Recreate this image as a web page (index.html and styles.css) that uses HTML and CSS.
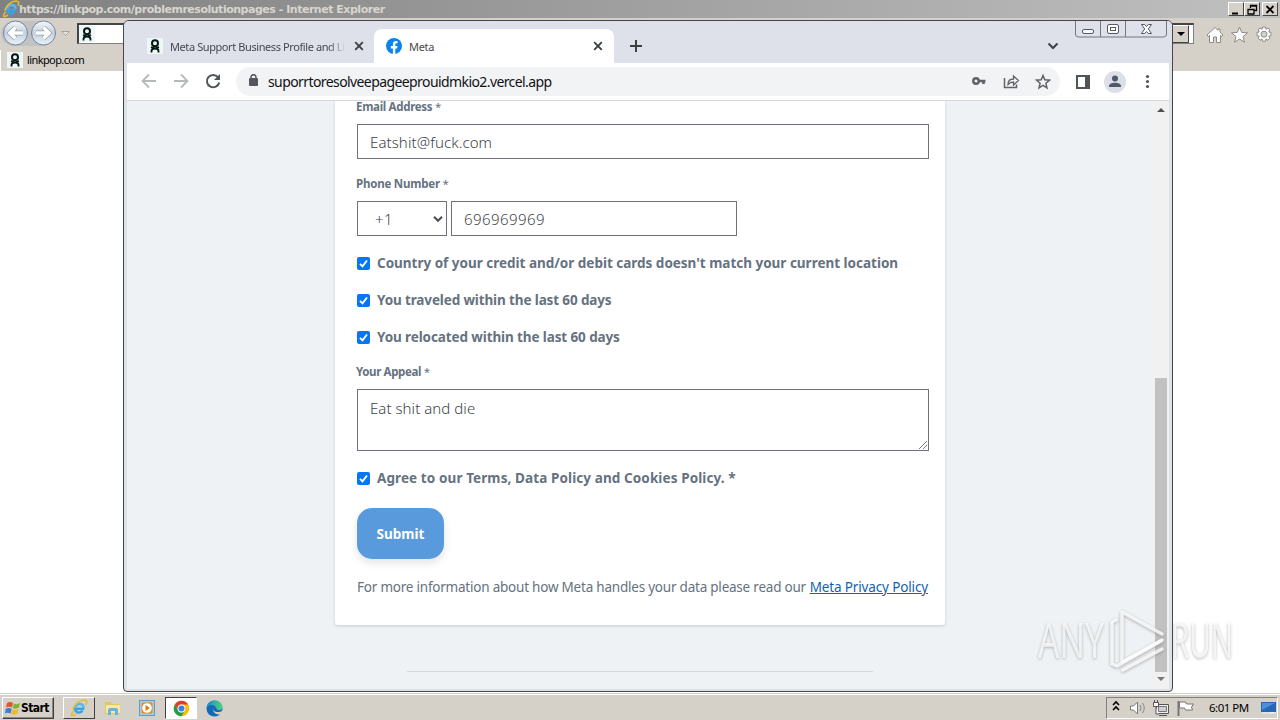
FILE: index.html
```html
<!DOCTYPE html>
<html lang="en">
<head>
<meta charset="utf-8">
<title>Meta</title>
<link rel="stylesheet" href="styles.css">
</head>
<body>
<svg class="defs" width="0" height="0">
  <symbol id="linkpop" viewBox="0 0 16 16"><rect width="16" height="16" fill="#edf7f6"/><circle cx="8" cy="5.300" r="3" fill="none" stroke="#0b1714" stroke-width="2"/><path d="M4.500 14.500v-1.500c0-1.500 1.500-2.500 3.500-2.500s3.500 1 3.500 2.500v1.500M4 9l4 1.500L12 9" fill="none" stroke="#0b1714" stroke-width="1.800"/></symbol>
  <symbol id="close" viewBox="0 0 10 10"><path d="M1.200 1.200l7.600 7.600M8.800 1.200l-7.600 7.600" stroke="#3c4043" stroke-width="1.900"/></symbol>
  <symbol id="ie" viewBox="0 0 18 18"><path d="M14.300 9.800H5.200c.1 4.300 5.700 4.900 7.200 1.700" fill="none" stroke="#38a3e8" stroke-width="2.600"/><path d="M5.200 8.800c.2-5.100 8.300-5.200 8.500 0" fill="none" stroke="#54b9f2" stroke-width="2.600"/><path d="M3.500 12C-.5 17 2 17.600 6 15M3 11C3.500 5 11 .5 15 1.200c2.300.5 2 2.400 1 4.500" fill="none" stroke="#e9bd28" stroke-width="1.500"/></symbol>
</svg>
<div class="desktop">
  <header class="ie-title">
    <svg class="ie-logo" width="18" height="18"><use href="#ie"/></svg>
    <span class="ie-name">https://linkpop.com/problemresolutionpages - Internet Explorer</span>
    <div class="classic">
      <svg width="15" height="14"><path d="M3 10.500h6" stroke="#000" stroke-width="2"/></svg>
      <svg width="15" height="14"><path d="M5.500 5V2.500h6v5H9M5 3h7" fill="none" stroke="#000" stroke-width="1.300"/><path d="M3 6.500h6v4.500H3zM2.500 6.500h7" fill="none" stroke="#000" stroke-width="1.300"/></svg>
      <svg class="gap" width="15" height="14"><path d="M3.500 3l7 7M10.500 3l-7 7" stroke="#000" stroke-width="1.800"/></svg>
    </div>
  </header>
  <div class="ie-bar">
    <div class="ie-nav">
      <svg width="72" height="27" viewBox="0 0 72 27"><defs><linearGradient id="nb" x2="0" y2="1"><stop stop-color="#f6f8fa"/><stop offset=".5" stop-color="#c5cfda"/><stop offset="1" stop-color="#e9f4fb"/></linearGradient></defs><rect x="1" y="1" width="54" height="25" rx="12.500" fill="#c1c2c3"/><circle cx="15.500" cy="13" r="12" fill="url(#nb)" stroke="#71869d"/><circle cx="43.500" cy="13" r="12" fill="url(#nb)" stroke="#71869d"/><path d="M23 13H10M15.500 7.500L10 13l5.500 5.500M36 13h13M43.500 7.500L49 13l-5.500 5.500" fill="none" stroke="#8fa0b2" stroke-width="5"/><path d="M23 13H10M15.500 7.500L10 13l5.500 5.500M36 13h13M43.500 7.500L49 13l-5.500 5.500" fill="none" stroke="#fff" stroke-width="3.600"/><path d="M61.500 11.500h8l-4 4z" fill="#e5e1db" stroke="#aaa59c"/></svg>
    </div>
    <div class="address"><svg width="16" height="16"><use href="#linkpop"/></svg><i class="drop"><b></b></i></div>
    <svg class="ie-icons" width="72" height="20" viewBox="0 0 72 20" fill="#fff" stroke="#8e8b86"><path d="M2 10l8-7.500 3 2.800V4h2v3.300L18 10l-1.200 1.500-1.300-1V17.500h-4V12H8.500v5.500h-4v-7l-1.300 1z"/><path d="M34.500 2l2.200 5.400 5.800.4-4.500 3.700 1.500 5.700-5-3.200-5 3.200 1.500-5.700-4.500-3.700 5.800-.4z"/><path d="M57.500 2h3l.5 2.300 2-1.300 2 2-1.300 2 2.300.5v3.200l-2.300.5 1.300 2-2 2-2-1.300-.5 2.300h-3l-.5-2.300-2 1.300-2-2 1.300-2-2.300-.5V7.500l2.300-.5-1.300-2 2-2 2 1.300z"/><circle cx="59" cy="9.200" r="3" fill="#d5d0ca"/></svg>
  </div>
  <div class="ie-tab"><svg width="16" height="16"><use href="#linkpop"/></svg><span>linkpop.com</span></div>
  <div class="ie-page"></div>
  <footer class="taskbar">
    <div class="start"><svg width="16" height="16" viewBox="0 0 16 16"><path d="M2 3q3-2 6 0L7 7.500q-3-1.500-6 0z" fill="#e2562a"/><path d="M9 3.500q3 1.500 6-.5l-1.200 4.500q-3 2-6 .5z" fill="#7cb52e"/><path d="M.8 8.800q3-1.500 6 0L5.600 13.500q-3-1.500-5.600 0z" fill="#3c7fc8"/><path d="M7.600 9.300q3 1.500 6-.3L12.300 13.700q-3 1.800-6 .3z" fill="#f4b922"/></svg><span>Start</span></div>
    <div class="task raised"><svg width="18" height="18"><use href="#ie"/></svg></div>
    <div class="task"><svg width="18" height="16" viewBox="0 0 18 16"><path d="M1 2h6l1 2h8v10H1z" fill="#e4c65f"/><path d="M2 5h14v8H2z" fill="#f8eaa4"/><path d="M4 15V10q0-2 2-2h6q2 0 2 2v5h-3v-4H7v4z" fill="#69b3dd"/></svg></div>
    <div class="task"><svg width="16" height="16" viewBox="0 0 16 16"><rect x=".5" y=".5" width="15" height="15" fill="#a3cdea" stroke="#5c9cc9"/><rect x="2.500" y="2.500" width="11" height="11" rx="1" fill="#f08b1d"/><circle cx="8" cy="8" r="4.800" fill="#fff"/><path d="M6.500 5l4.300 3-4.300 3z" fill="#e2730c"/></svg></div>
    <div class="task pressed"><svg width="17" height="17" viewBox="0 0 48 48"><circle cx="24" cy="24" r="22" fill="#fbbc04"/><path d="M5 13A22 22 0 0 1 43 13H24a11 11 0 0 0-9.500 16.500z" fill="#e33b2e"/><path d="M5 13a22 22 0 0 0 19 33l9.500-16.500a11 11 0 0 1-19 0z" fill="#259b4b"/><circle cx="24" cy="24" r="11" fill="#fff"/><circle cx="24" cy="24" r="8.500" fill="#3b7de9"/></svg></div>
    <div class="task edge"><svg width="17" height="17" viewBox="0 0 17 17"><defs><linearGradient id="eg"><stop stop-color="#158bd1"/><stop offset="1" stop-color="#50d37c"/></linearGradient></defs><circle cx="8.500" cy="8.500" r="8" fill="#1469b6"/><path d="M.5 9C1-2 16-1 16.500 7c0 4-6 4-6 1.500C9 4 2 3.500.5 9z" fill="url(#eg)"/><path d="M7.500 8c-1 3.500 3 5 7.500 3.500l1.500-1v3l-2 1C10 15 6 12 7.500 8z" fill="#d5d0ca"/></svg></div>
    <div class="tray">
      <svg width="112" height="20" viewBox="0 0 112 20" fill="none"><path d="M6 7l3-3 3 3M6 12l3-3 3 3" stroke="#000" stroke-width="1.600"/><path d="M23.500 8h3l4-4v12l-4-4h-3z" fill="#fff" stroke="#777"/><path d="M33 7q2 3 0 6M35.500 5q3.500 5 0 10" stroke="#888"/><path d="M49.500 6.500h12v9h-12zM52 17.500h8" fill="#eee" stroke="#555"/><path d="M51.500 8.500h8v5h-8z" fill="#d0d0d0" stroke="#777"/><path d="M46.500 4.500h5v4h-5zM47.500 2v2M50.500 2v2M49 9v7h3" fill="#f8f8f8" stroke="#555"/><path d="M71.500 3v15" stroke="#777" stroke-width="2"/><path d="M72.500 4h6l1 2h7l-2 3 1 3h-7l-1-2h-5z" fill="#fff" stroke="#777"/></svg>
      <span>6:01 PM</span>
      <svg class="desk" width="16" height="14" viewBox="0 0 16 14"><path d="M0 1h15v10H0z" fill="#2866b8"/><path d="M1 2h13L1 9z" fill="#4f91d8"/><path d="M1 12h14M9 11.500h4" stroke="#eef4fb"/></svg>
    </div>
  </footer>
</div>

<main class="chrome">
  <div class="tabs">
    <div class="tab back"><svg width="16" height="16"><use href="#linkpop"/></svg><span class="tabname">Meta Support Business Profile and Lin</span><svg width="10" height="10"><use href="#close"/></svg></div>
    <div class="tab front"><svg width="16" height="16" viewBox="0 0 16 16"><circle cx="8" cy="8" r="8" fill="#0c84ee"/><path d="M6.900 16v-5.500H4.800V8.100h2.100V6.300c0-2.200 1.200-3.200 3-3.200l1.700.15v2h-1c-1 0-1.300.5-1.300 1.200v1.650h2.200l-.4 2.400H9.300V16z" fill="#fff"/></svg><span class="metaname">Meta</span><svg width="10" height="10"><use href="#close"/></svg></div>
    <svg class="plus" width="12" height="12"><path d="M6 0v12M0 6h12" stroke="#3c4043" stroke-width="2"/></svg>
    <svg class="chev" width="12" height="8"><path d="M1.500 1.500L6 6l4.500-4.500" fill="none" stroke="#3c4043" stroke-width="2"/></svg>
    <svg class="aero" width="94" height="18" viewBox="0 0 94 18" fill="none" stroke="#74777f"><path d="M1.500 0v13q0 3 3 3h85q3 0 3-3V0M26.500 0v16M51.500 0v16"/><g stroke="#555962"><rect x="8.500" y="8.500" width="11" height="4" rx="1.500" fill="#fff"/><rect x="33.500" y="3.500" width="11" height="9" rx="1.500" fill="#fff"/><rect x="36.500" y="6.500" width="5" height="3"/><path d="M67.500 3.500h3.200l1.800 2 1.800-2h3.200L74.300 8l3.200 4.500h-3.200l-1.800-2-1.800 2h-3.200L70.700 8z" fill="#fff"/></g></svg>
  </div>
  <div class="toolbar">
    <svg class="nav" width="84" height="18" viewBox="0 0 84 18" fill="none" stroke-width="1.800"><path d="M16 9H2.500M9 2.500L2.500 9 9 15.500M34 9h13.500M41 2.500L47.500 9 41 15.500" stroke="#b6b9bc"/><path d="M78 5.200A6.200 6.200 0 1 0 79.200 10.500" stroke="#50545a" stroke-width="2"/><path d="M80 2v6h-6z" fill="#50545a"/></svg>
    <div class="omni">
      <svg class="lock" width="9" height="12"><rect y="4" width="9" height="8" rx="1" fill="#54585d"/><path d="M2 5V3.200a2.500 2.500 0 0 1 5 0V5" fill="none" stroke="#54585d" stroke-width="1.500"/></svg>
      <span class="url">suporrtoresolveepageeprouidmkio2.vercel.app</span>
      <svg class="actions" width="80" height="18" viewBox="0 0 80 18" fill="none" stroke="#5f6368"><circle cx="5" cy="8" r="2.700" stroke-width="2.400"/><path d="M8 8H14.500M12.500 8v3" stroke-width="2.600"/><path d="M33.500 5v9.500h12v-3" stroke-width="1.500"/><path d="M37 11.500c0-4 2.500-5.500 5.500-5.500V3l5 4.500-5 4.500V9c-2.500 0-4 .6-5.500 2.500z" stroke-width="1.300"/><path d="M72 2.500l1.800 4.300 4.700.4-3.600 3.100 1.100 4.600-4-2.500-4 2.500 1.100-4.600-3.600-3.100 4.700-.4z" stroke-width="1.500"/></svg>
    </div>
    <svg class="right" width="86" height="24" viewBox="0 0 86 24"><path d="M4 6h12v12H4z" fill="none" stroke="#50545a" stroke-width="2"/><path d="M12 5h5v14h-5z" fill="#50545a"/><circle cx="42" cy="12" r="11" fill="#dcdfe7"/><circle cx="42" cy="8.500" r="3" fill="#50586a"/><path d="M36 17v-1c0-4.500 12-4.500 12 0v1z" fill="#50586a"/><g fill="#50545a"><circle cx="74.500" cy="6.500" r="1.600"/><circle cx="74.500" cy="11.500" r="1.600"/><circle cx="74.500" cy="16.500" r="1.600"/></g></svg>
  </div>
  <div class="viewport">
    <div class="page">
      <form class="card">
        <div class="label"><span class="l1">Email Address <em>*</em></span></div>
        <div class="field"><span class="v1">Eatshit@fuck.com</span></div>
        <div class="label second"><span class="l2">Phone Number <em>*</em></span></div>
        <div class="phone">
          <div class="field code"><span class="v2">+1</span><svg width="10" height="7"><path d="M1 .8l4 4 4-4" fill="none" stroke="#4a4d55" stroke-width="2"/></svg></div>
          <div class="field number"><span class="v3">696969969</span></div>
        </div>
        <div class="checks">
          <div class="check"><svg class="box" width="13" height="13"><use href="#tick"/><path d="M3 6.800l2.500 2.500L10 3.500" fill="none" stroke="#fff" stroke-width="1.900"/></svg><span class="c1">Country of your credit and/or debit cards doesn't match your current location</span></div>
          <div class="check"><svg class="box" width="13" height="13"><path d="M3 6.800l2.500 2.500L10 3.500" fill="none" stroke="#fff" stroke-width="1.900"/></svg><span class="c2">You traveled within the last 60 days</span></div>
          <div class="check"><svg class="box" width="13" height="13"><path d="M3 6.800l2.500 2.500L10 3.500" fill="none" stroke="#fff" stroke-width="1.900"/></svg><span class="c3">You relocated within the last 60 days</span></div>
        </div>
        <div class="label appeal"><span class="l3">Your Appeal <em>*</em></span></div>
        <div class="area"><span class="v4">Eat shit and die</span><svg width="9" height="9"><path d="M1 9l8-8M5 9l4-4" stroke="#777"/></svg></div>
        <div class="check agree"><svg class="box" width="13" height="13"><path d="M3 6.800l2.500 2.500L10 3.500" fill="none" stroke="#fff" stroke-width="1.900"/></svg><span class="c4">Agree to our Terms, Data Policy and Cookies Policy. *</span></div>
        <div class="submit"><span class="c5">Submit</span></div>
        <div class="info"><span class="p1">For more information about how Meta handles your data please read our</span><a class="p2">Meta Privacy Policy</a></div>
      </form>
      <div class="rule"></div>
    </div>
    <div class="scroll"><i class="up"></i><i class="thumb"></i><i class="down"></i></div>
  </div>
</main>
<svg class="mark" width="206" height="72" viewBox="0 0 206 72">
  <g class="ghost" fill="#fff" fill-opacity=".75"><text x="6" y="55" textLength="66" lengthAdjust="spacingAndGlyphs">ANY</text><text x="139" y="55" textLength="62" lengthAdjust="spacingAndGlyphs">RUN</text></g>
  <g class="ghost" fill="none" stroke="#fff" stroke-opacity=".8" stroke-width="3.500" stroke-linejoin="round" stroke-linecap="round"><path d="M90 9l40 22M90 9v50l40-22"/><path d="M84 17l-4 2v42l5 2 44-25M91 67l39-21"/></g>
</svg>
</body>
</html>
```
FILE: styles.css
```css
* { box-sizing: border-box; }
body { margin: 0; width: 1280px; height: 720px; overflow: hidden; position: relative; font-family: "Noto Sans", sans-serif; }
svg { display: block; flex: none; }
span, a { white-space: nowrap; }
.defs { position: absolute; }
.desktop { height: 720px; display: flex; flex-direction: column; background: #d5d0c8; }
.ie-title { height: 18px; display: flex; align-items: center; padding: 0 2px; background: linear-gradient(90deg, #808080, #c0c0c0); }
.ie-name { font: bold 11px "DejaVu Sans", sans-serif; color: #d8d5cf; letter-spacing: -.48px; margin-left: -1px; }
.classic { margin-left: auto; display: flex; }
.classic svg, .drop { background: #d5d0c8; border: 1px solid; border-color: #fff #444 #444 #fff; width: 16px; height: 14px; }
.classic .gap { margin-left: 2px; }
.ie-bar { height: 32px; display: flex; align-items: center; padding: 0 3px 2px 0; }
.ie-nav { width: 77px; }
.address { width: 1117px; height: 21px; background: #fff; border: 1px solid #808080; border-top: 2px solid #444; border-left: 2px solid #444; display: flex; align-items: center; }
.drop { margin-left: auto; margin-right: 4px; width: 17px; height: 18px; display: flex; align-items: center; justify-content: center; }
.drop b { border: 4px solid transparent; border-top-color: #000; border-bottom: 0; }
.ie-icons { margin-left: 11px; margin-top: 4px; }
.ie-tab { height: 21px; display: flex; align-items: center; gap: 4px; padding: 0 0 2px 6px; border-left: 1px solid #fff; font-size: 11px; color: #000; }
.ie-tab span { letter-spacing: -.6px; }
.ie-page { flex: 1; background: #fff; }
.taskbar { height: 27px; border-top: 1px solid #d5d0c8; box-shadow: inset 0 1px #fff; display: flex; align-items: center; padding: 3px 2px 1px; }
.start { width: 52px; height: 22px; display: flex; align-items: center; padding-left: 2px; border: 1px solid; border-color: #fff #404040 #404040 #fff; box-shadow: inset -1px -1px #8c8881; margin-right: 9px; }
.start span { font: bold 12px "DejaVu Sans Condensed", "DejaVu Sans", sans-serif; letter-spacing: -.6px; }
.task { width: 32px; height: 22px; display: flex; align-items: center; justify-content: center; margin-right: 2px; border: 1px solid transparent; }
.raised { border-color: #fff #404040 #404040 #fff; }
.pressed { background: #fff; border-color: #404040 #fff #fff #404040; }
.edge { padding-right: 1px; }
.tray { margin-left: auto; width: 172px; height: 22px; border: 1px solid; border-color: #85817a #fff #fff #85817a; display: flex; align-items: center; font-size: 11.500px; }
.tray span { margin: -2px 0 0 -10px; letter-spacing: -.5px; }
.desk { margin-left: 12px; }

.chrome { position: absolute; left: 123px; top: 20px; width: 1050px; height: 672px; border: 1px solid #45464a; border-radius: 6px 6px 4px 4px; background: #dfe1e8; display: flex; flex-direction: column; overflow: hidden; }
.tabs { height: 42px; position: relative; display: flex; padding: 8px 0 0 3px; background: #dee1e9; }
.tab { display: flex; align-items: center; height: 34px; font-size: 11px; color: #45484d; }
.back { width: 247px; padding: 0 10px 0 20px; }
.tabname { width: 176px; margin: 0 auto 0 7px; overflow: hidden; letter-spacing: -.41px; -webkit-mask: linear-gradient(90deg, #000 90%, transparent); mask: linear-gradient(90deg, #000 90%, transparent); }
.front { width: 240px; background: #fff; border-radius: 8px 8px 0 0; padding: 0 11px 0 12px; }
.metaname { margin: 0 auto 0 7px; letter-spacing: -.3px; }
.plus { margin: 11px 0 0 16px; }
.chev { position: absolute; left: 923px; top: 21px; }
.aero { position: absolute; right: 4px; top: 0; }
.toolbar { height: 38px; margin: 0 3px; background: #fff; border-bottom: 1px solid #d5d7dc; display: flex; align-items: center; }
.nav { margin-left: 13px; margin-top: -1px; }
.omni { margin-left: 12px; width: 824px; height: 29px; border-radius: 15px; background: #f1f3f5; display: flex; align-items: center; padding: 0 9px 0 13px; }
.lock { margin-top: -3px; }
.url { margin-left: 10px; font-size: 14px; color: #101114; letter-spacing: -.59px; }
.actions { margin-left: auto; }
.right { margin-left: 13px; }
.viewport { height: 588px; margin: 0 3px; background: #eef2f5; display: flex; overflow: hidden; }
.page { width: 1026px; padding-left: 208px; }
.card { width: 610px; height: 524px; padding: 0 16px 0 22px; background: #fff; border-radius: 0 0 3px 3px; box-shadow: 0 1px 3px #a7afb8a0; color: #65727f; display: flex; flex-direction: column; }
.label { height: 16px; margin-top: -2px; line-height: 16px; font-size: 11.500px; font-weight: 700; }
.label em { font-style: normal; font-weight: 400; }
.label span { margin-left: -1px; }
.l1 { letter-spacing: -.3px; }
.l2 { letter-spacing: -.22px; }
.l3 { letter-spacing: -.37px; }
.second { margin-top: 17px; }
.appeal { margin-top: 8px; }
.field { height: 35px; margin-top: 9px; border: 1px solid #6d727e; display: flex; align-items: center; padding: 1px 3px 0 12px; font-size: 15px; font-weight: 300; color: #3d424c; }
.v1 { letter-spacing: .1px; }
.v2, .v3 { letter-spacing: .45px; }
.phone { display: flex; gap: 4px; }
.code { width: 90px; padding-left: 17px; justify-content: space-between; }
.number { width: 286px; }
.checks { margin-top: 9px; }
.check { height: 37px; display: flex; align-items: center; font-size: 13.500px; font-weight: 700; }
.check span { margin-top: -1px; }
.c1 { letter-spacing: -.01px; }
.c2 { letter-spacing: -.13px; }
.c3 { letter-spacing: -.11px; }
.c4 { letter-spacing: .1px; }
.box { border-radius: 2px; background: #0875f3; margin-right: 7px; }
.area { height: 62px; margin-top: 9px; border: 1px solid #6d727e; padding: 7px 1px 1px 12px; font-size: 15px; font-weight: 300; color: #3d424c; line-height: 22px; display: flex; justify-content: space-between; }
.v4 { letter-spacing: .05px; }
.area svg { align-self: flex-end; }
.agree { height: 20px; margin-top: 17px; }
.agree span { margin-top: 0; }
.submit { width: 87px; height: 51px; margin-top: 20px; border-radius: 15px; background: #589adc; color: #fff; font-size: 13.500px; font-weight: 700; display: flex; align-items: center; justify-content: center; box-shadow: 0 4px 8px #0000001c; }
.info { height: 20px; line-height: 20px; margin-top: 18px; padding-right: 1px; font-size: 13.500px; display: flex; justify-content: space-between; }
.p1 { letter-spacing: -.22px; }
.info a { color: #1262b0; text-decoration: underline; letter-spacing: -.14px; }
.rule { width: 466px; height: 1px; margin: 46px 0 0 72px; background: #d3d8dd; }
.scroll { width: 16px; background: #f1f1f1; display: flex; flex-direction: column; align-items: center; }
.up { border: 4px solid transparent; border-bottom-color: #505050; border-top: 0; margin-top: 7px; }
.thumb { width: 12px; height: 294px; margin-top: 266px; background: #c1c1c1; }
.down { border: 4px solid transparent; border-top-color: #777; border-bottom: 0; margin-top: 5px; }
.mark { position: absolute; left: 1032px; top: 603px; }
.ghost { filter: drop-shadow(0 1px 1.500px #777a); }
.mark text { font: 50px "Open Sans", sans-serif; }
```
